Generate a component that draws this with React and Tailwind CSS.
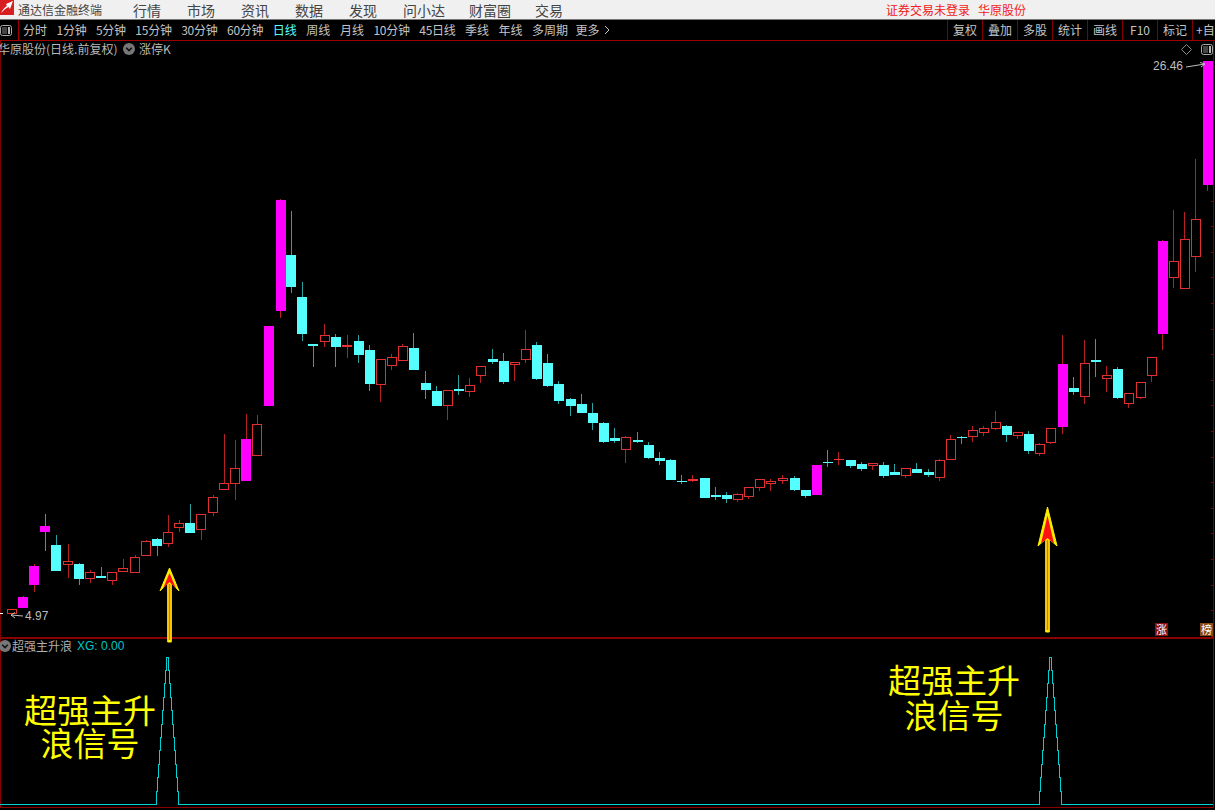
import React from 'react';

const cjk = { fontFamily: '"Noto Sans CJK SC", "Noto Sans", sans-serif' };

const menus = ['行情', '市场', '资讯', '数据', '发现', '问小达', '财富圈', '交易'];
const periods = ['分时', '1分钟', '5分钟', '15分钟', '30分钟', '60分钟', '日线', '周线', '月线', '10分钟', '45日线', '季线', '年线', '多周期'];
const tools = ['复权', '叠加', '多股', '统计', '画线', 'F10', '标记'];
const ticks = Array.from({ length: 23 }, (_, i) => 73 + i * 25.6);

// x, wick top, wick bottom, body top, body bottom, kind
const candles = [
  [11.5, 609, 614, 609.5, 613, 'r'], [22.5, 595.5, 608, 596.5, 608, 'm'], [33.5, 564, 591.5, 565.5, 585, 'm'],
  [44.5, 513.5, 550.5, 526, 531.5, 'mc'], [55.5, 535, 571, 544.5, 570.5, 'c'], [67.5, 544, 577.5, 561.5, 564.5, 'r'],
  [78.5, 563, 584.5, 563.5, 579, 'c'], [89.5, 569.5, 582.5, 572, 578.5, 'r'], [100.5, 566.5, 577, 576, 577.5, 'c'],
  [111.5, 572, 584.5, 572.5, 580.5, 'r'], [122.5, 558.5, 571, 568, 571.5, 'r'], [134.5, 554.5, 572, 557.5, 572.5, 'r'],
  [145.5, 539.5, 555.5, 541, 555.5, 'r'], [156.5, 538, 555.5, 538.5, 545.5, 'c'], [167.5, 514.5, 546.5, 532, 543.5, 'r'],
  [178.5, 520, 531.5, 523.5, 527.5, 'r'], [189.5, 503.5, 533, 522.5, 532.5, 'c'], [200.5, 514, 539.5, 514, 529.5, 'r'],
  [212.5, 495, 515.5, 497, 512.5, 'r'], [223.5, 434, 489, 483.5, 489.5, 'r'], [234.5, 440, 499.5, 468, 483.5, 'r'],
  [245.5, 414, 481, 439, 481, 'm'], [256.5, 415, 455, 424.5, 455, 'r'], [268.5, 326, 406, 326, 406, 'm'],
  [280, 199, 318, 199.5, 311, 'm'], [290.5, 210.5, 293, 254.5, 287, 'c'], [301.5, 281.5, 341, 296.5, 334, 'c'],
  [312.5, 344, 366.5, 344, 345.5, 'c'], [324, 323.5, 347, 335.5, 341.5, 'r'], [335, 333.5, 366.5, 336.5, 346.5, 'c'],
  [346.5, 335, 357.5, 345, 347, 'rf'], [358, 335, 362.5, 340.5, 355, 'c'], [369, 345, 390.5, 349.5, 383.5, 'c'],
  [380, 359, 402, 359.5, 384.5, 'r'], [391, 354, 370, 357.5, 365.5, 'r'], [402, 343.5, 360, 346.5, 360.5, 'r'],
  [413, 332.5, 370, 347.5, 370, 'c'], [425, 370.5, 399, 382.5, 390, 'c'], [436, 385.5, 406, 390.5, 406, 'c'],
  [447, 390, 420, 390.5, 405.5, 'r'], [458, 375, 395, 389, 391, 'c'], [469, 378, 397, 385.5, 391.5, 'r'],
  [480, 366, 383, 366.5, 375.5, 'r'], [492, 349, 364, 358.5, 361.5, 'c'], [503, 353, 383.5, 360.5, 381.5, 'c'],
  [514, 362, 380.5, 362.5, 364.5, 'r'], [525, 330, 363, 349.5, 359, 'r'], [536, 341.5, 380, 344.5, 379, 'c'],
  [547, 354, 387, 362.5, 385.5, 'c'], [558, 381, 403.5, 383.5, 400.5, 'c'], [570, 398, 416, 398.5, 405.5, 'c'],
  [581, 394, 412.5, 404, 412.5, 'c'], [592, 403, 430, 412.5, 422.5, 'c'], [603, 422, 443, 423, 441.5, 'c'],
  [614, 427.5, 443, 438, 440.5, 'c'], [625, 436, 463, 437.5, 449.5, 'r'], [637, 432, 443, 439.5, 441.5, 'c'],
  [648, 442, 459, 444.5, 457.5, 'c'], [659, 452, 465, 458, 460.5, 'c'], [670, 459, 480, 459.5, 479.5, 'c'],
  [681, 475, 484, 481, 482, 'c'], [692, 475, 481.5, 479, 481, 'rf'], [704, 478, 497.5, 478, 497.5, 'c'],
  [715, 487, 500, 495, 497, 'c'], [726, 492, 503, 495, 498.5, 'c'], [737, 492.5, 501.5, 494.5, 499.5, 'r'],
  [748, 487, 499, 487.5, 496.5, 'r'], [759, 479, 490.5, 479.5, 487.5, 'r'], [770, 479, 490.5, 481.5, 483.5, 'r'],
  [782, 475, 483.5, 478.5, 480.5, 'r'], [794, 476, 490.5, 478, 489.5, 'c'], [805, 490, 497.5, 490, 495.5, 'c'],
  [816, 465, 494.5, 465, 494.5, 'm'], [827, 450, 467, 462, 463, 'c'], [838, 452, 465, 459, 460, 'rf'],
  [850, 460, 467.5, 460, 465.5, 'c'], [861, 462, 471, 463.5, 468.5, 'c'], [872, 463, 469.5, 463.5, 465.5, 'r'],
  [883, 462, 477.5, 465, 475.5, 'c'], [894, 464, 474.5, 472, 474.5, 'c'], [905, 468, 477.5, 468.5, 475.5, 'r'],
  [916, 463, 472.5, 468.5, 472.5, 'c'], [928, 469, 477, 472, 475, 'c'], [939, 459, 481, 460.5, 477.5, 'r'],
  [950, 435, 459, 439.5, 459.5, 'r'], [961, 436, 444, 436.5, 438, 'c'], [972, 426, 442, 430.5, 436.5, 'r'],
  [983, 426, 435.5, 428.5, 432.5, 'r'], [995, 411, 430, 422.5, 428.5, 'r'], [1006, 425, 442, 425.5, 434.5, 'c'],
  [1017, 432, 439, 432.5, 435.5, 'r'], [1028, 431, 454, 433.5, 450.5, 'c'], [1039, 443, 456, 444.5, 453.5, 'r'],
  [1050, 428, 444, 428.5, 442.5, 'r'], [1062, 335, 434, 363.5, 426.5, 'm'], [1073, 377, 395, 387.5, 392, 'c'],
  [1084, 340, 403.5, 363.5, 396.5, 'r'], [1095, 339, 377, 359.5, 362, 'c'], [1106, 366, 392, 375.5, 378.5, 'r'],
  [1117, 367, 399, 368.5, 398, 'c'], [1128, 393, 408, 393.5, 403.5, 'r'], [1140, 382, 399, 382.5, 397.5, 'r'],
  [1151, 357, 382, 357.5, 375.5, 'r'], [1162, 240, 350, 240.5, 333.5, 'm'], [1173, 209.5, 287.5, 261.5, 277, 'r'],
  [1184, 211.5, 288, 239.5, 288, 'r'], [1195, 158.5, 272, 219.5, 256, 'r'], [1207, 61, 190.5, 61, 184.5, 'm'],
];

// stair stepped peak, one pixel sideways per step
const peak = (cx, top, bottom) => {
  const steps = 11;
  const rise = (bottom - top) / steps;
  const pts = [];
  for (let i = 0; i < steps; i++) {
    const y = bottom - rise * i;
    pts.push(`${cx - steps + i},${y}`, `${cx - steps + i},${y - rise}`);
  }
  pts.push(`${cx},${top}`);
  for (let i = steps - 1; i >= 0; i--) {
    const y = bottom - rise * i;
    pts.push(`${cx + steps - i},${y - rise}`, `${cx + steps - i},${y}`);
  }
  return pts.join(' ');
};

const Candle = ({ c }) => {
  const [x, wt, wb, bt, bb, kind] = c;
  const cyanBody = kind === 'c';
  const magenta = kind === 'm' || kind === 'mc';
  const wick = kind === 'c' || kind === 'mc' ? '#2ba3a3' : '#b52020';
  const left = Math.round(x - 4.5);
  const wx = Math.round(x) + 0.5;
  const h = Math.max(bb - bt, 1);
  return (
    <g shapeRendering="crispEdges">
      <line x1={wx} x2={wx} y1={wt} y2={wb} stroke={wick} strokeWidth="1" />
      {cyanBody && <rect x={left} y={bt} width="10" height={h} fill="#55ffff" />}
      {magenta && <rect x={left} y={bt} width="10" height={h} fill="#ff00ff" />}
      {kind === 'rf' && <rect x={left} y={bt} width="10" height={h} fill="#f03030" />}
      {kind === 'r' && <rect x={left + 0.5} y={bt} width="9" height={h} fill="#000" stroke="#e03030" strokeWidth="1" />}
    </g>
  );
};

const Arrow = ({ x, tip, wing, notch, end }) => {
  const redTop = tip + (wing - tip) * 0.22;
  return (
    <g>
      <path
        d={`M${x} ${tip} L${x + 9.5} ${wing} L${x + 1.8} ${notch} L${x + 1.8} ${end} L${x - 1.8} ${end} L${x - 1.8} ${notch} L${x - 9.5} ${wing} Z`}
        fill="#ffee00"
        stroke="#ffee00"
        strokeWidth="1"
        strokeLinejoin="round"
      />
      <path d={`M${x} ${redTop} L${x + 6.5} ${wing - 2.5} L${x} ${notch - 1} L${x - 6.5} ${wing - 2.5} Z`} fill="#ff1010" />
      <line x1={x} x2={x} y1={notch + 1} y2={end - 2} stroke="#ee6a10" strokeWidth="1.6" />
    </g>
  );
};

const PanelIcon = ({ className }) => (
  <svg width="12" height="11" viewBox="0 0 12 11" className={className}>
    <rect x="0.5" y="0.5" width="11" height="10" rx="2" fill="none" stroke="#aaa" />
    <rect x="2" y="2" width="5" height="7" fill="#444" />
    <rect x="8" y="2" width="2" height="7" fill="#bbb" />
  </svg>
);

const Chevron = ({ className }) => (
  <svg width="12" height="12" viewBox="0 0 12 12" className={className}>
    <circle cx="6" cy="6" r="6" fill="#777" />
    <path d="M3.2 4.8 L6 7.6 L8.8 4.8" fill="none" stroke="#111" strokeWidth="1.6" />
  </svg>
);

const periodClass = (p) => {
  if (p === '日线') return 'text-[#55ffff]';
  return /\d/.test(p) ? 'tracking-[-0.25px]' : '';
};

export default function App() {
  return (
    <div className="relative flex h-[810px] w-[1215px] flex-col overflow-hidden bg-black text-[12px] leading-none" style={cjk}>
      {/* Title bar */}
      <div className="flex h-[19px] shrink-0 items-center bg-[#f0f0f0]">
        <svg width="14" height="15" viewBox="0 0 14 15" className="mb-1 shrink-0">
          <rect width="14" height="15" fill="#d81e1e" />
          <path d="M1 13 C3 9 5 7 7 6 L6 4 L13 1 L10 9 L8.5 7 C6 8 4 10 1 13 Z" fill="#fff" />
        </svg>
        <span className="ml-1 w-[85px] text-[#444]">通达信金融终端</span>
        <div className="ml-[30px] flex gap-[26px] text-[14px] text-[#444]">
          {menus.map((m) => (
            <span key={m} className={m === '财富圈' || m === '交易' ? '-ml-[2px]' : ''}>
              {m}
            </span>
          ))}
        </div>
        <div className="ml-[323px] flex gap-2 text-[#f02020]">
          <span>证券交易未登录</span>
          <span>华原股份</span>
        </div>
      </div>

      {/* Period toolbar */}
      <div className="flex h-[22px] shrink-0 items-center border-t border-b border-t-[#777] border-b-[#a00000] text-[#c4c4c4]">
        <PanelIcon className="shrink-0" />
        <span className="ml-[6px] h-full w-px bg-[#a00000]" />
        <div className="ml-1 flex gap-[9.5px] whitespace-nowrap">
          {periods.map((p) => (
            <span key={p} className={periodClass(p)}>
              {p}
            </span>
          ))}
          <span className="-ml-[2px] flex items-center gap-1">
            更多
            <svg width="6" height="10" viewBox="0 0 6 10">
              <path d="M1 1 L5 5 L1 9" fill="none" stroke="#c4c4c4" />
            </svg>
          </span>
        </div>
        <div className="ml-auto flex h-full">
          {tools.map((t) => (
            <span key={t} className="flex w-[35px] items-center justify-center border-l border-[#800000]">
              {t}
            </span>
          ))}
          <span className="flex w-[23px] items-center whitespace-nowrap border-l border-[#800000] pl-[3px]">+自</span>
        </div>
      </div>

      {/* Candle chart */}
      <div className="relative mr-px flex-1 border-r border-l border-[#7a0000]">
        <svg className="absolute -left-px -top-[41px]" width="1215" height="640" viewBox="0 0 1215 640">
          <line x1="0" x2="3" y1="613.5" y2="613.5" stroke="#fff" />
          {ticks.map((y) => (
            <line key={y} x1="1211" x2="1213" y1={y} y2={y} stroke="#8b0000" shapeRendering="crispEdges" />
          ))}
          {candles.map((c) => (
            <Candle key={c[0]} c={c} />
          ))}
        </svg>
        <div className="relative flex items-center pt-[2px] text-[#b8b8b8]">
          <span className="-ml-[3px] w-[125px] whitespace-nowrap">华原股份(日线.前复权)</span>
          <Chevron className="shrink-0" />
          <span className="ml-1">涨停K</span>
        </div>
        <svg width="11" height="11" viewBox="0 0 11 11" className="absolute right-[21px] top-[3px]">
          <path d="M5.5 0.5 L10.5 5.5 L5.5 10.5 L0.5 5.5 Z" fill="none" stroke="#888" />
        </svg>
        <PanelIcon className="absolute right-0 top-[3px]" />
        <div className="absolute left-[1152px] top-[19px] flex items-center text-[#bdbdbd]" style={{ fontFamily: '"Liberation Sans", sans-serif' }}>
          <span className="text-[12px]">26.46</span>
          <svg width="22" height="8" viewBox="0 0 22 8" className="ml-0.5">
            <path d="M1 5 L20 2 M15 0.5 L20 2 L16 5" fill="none" stroke="#bdbdbd" />
          </svg>
        </div>
        <div className="absolute left-[9px] top-[569px] flex items-center text-[#bdbdbd]" style={{ fontFamily: '"Liberation Sans", sans-serif' }}>
          <svg width="14" height="8" viewBox="0 0 14 8">
            <path d="M13 4 L1 3 M5 0.5 L1 3 L5 6" fill="none" stroke="#bdbdbd" />
          </svg>
          <span className="ml-px">4.97</span>
        </div>
        <span className="absolute bottom-[1px] left-[1154px] flex h-[13px] w-[13px] items-center justify-center bg-[#8b1010] text-[11px] text-white">涨</span>
        <span className="absolute bottom-[1px] left-[1199px] flex h-[13px] w-[13px] items-center justify-center bg-[#8b4a14] text-[11px] text-white">榜</span>
      </div>

      {/* Indicator panel */}
      <div className="relative mr-px mb-[2px] h-[171px] shrink-0 border-t-2 border-b border-r border-l border-[#8b0000]">
        <svg className="absolute -left-px -top-[2px]" width="1215" height="171" viewBox="0 637 1215 171">
          <polyline
            points={`0,804.5 ${peak(167.5, 657, 804.5)} ${peak(1050.5, 657, 804.5)} 1213,804.5`}
            fill="none"
            stroke="#00d0d0"
            strokeWidth="1"
            shapeRendering="crispEdges"
          />
        </svg>
        <div className="relative flex items-center pt-[1px]">
          <Chevron className="-ml-[2px] shrink-0" />
          <span className="ml-[1px] text-[#b0b0b0]">超强主升浪</span>
          <span className="ml-[5px] text-[#00c8c8]" style={{ fontFamily: '"Liberation Sans", sans-serif' }}>
            XG: 0.00
          </span>
        </div>
        <div className="absolute left-[22px] top-[54px] w-[134px] text-center text-[33px] leading-[33px] text-[#ffff00]">
          超强主升
          <br />
          浪信号
        </div>
        <div className="absolute left-[886px] top-[23px] w-[134px] text-center text-[33px] leading-[35px] text-[#ffff00]">
          超强主升
          <br />
          浪信号
        </div>
      </div>

      {/* Signal arrows sit over both panels */}
      <svg className="pointer-events-none absolute left-0 top-0" width="1215" height="810" viewBox="0 0 1215 810">
        <Arrow x={169.5} tip={568} wing={591} notch={583} end={642} />
        <Arrow x={1047.5} tip={507} wing={546} notch={539} end={632} />
      </svg>
    </div>
  );
}
